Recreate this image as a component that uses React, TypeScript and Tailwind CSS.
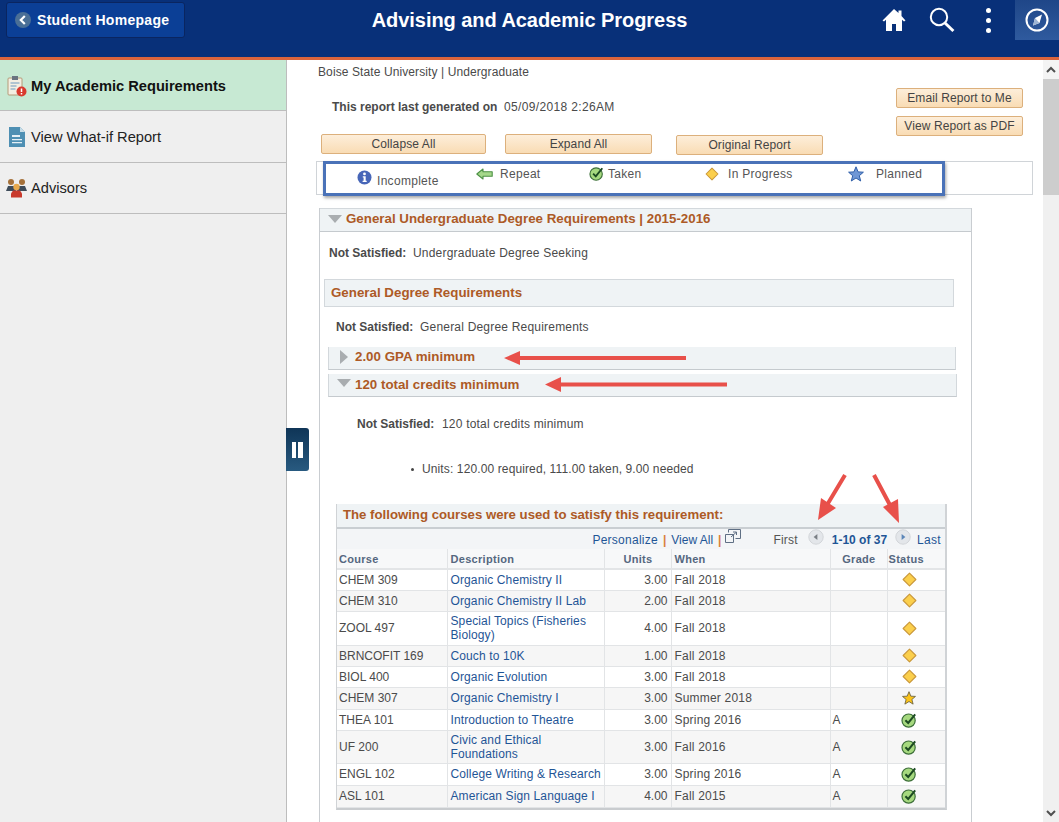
import type { ReactNode } from 'react';

type Status = 'progress' | 'planned' | 'taken';

const COURSES: { course: string; desc: ReactNode; units: string; when: string; grade: string; status: Status; h: string }[] = [
  { course: 'CHEM 309', desc: 'Organic Chemistry II', units: '3.00', when: 'Fall 2018', grade: '', status: 'progress', h: 'h-[21px]' },
  { course: 'CHEM 310', desc: 'Organic Chemistry II Lab', units: '2.00', when: 'Fall 2018', grade: '', status: 'progress', h: 'h-[21px]' },
  { course: 'ZOOL 497', desc: 'Special Topics (Fisheries Biology)', units: '4.00', when: 'Fall 2018', grade: '', status: 'progress', h: 'h-[34px]' },
  { course: 'BRNCOFIT 169', desc: 'Couch to 10K', units: '1.00', when: 'Fall 2018', grade: '', status: 'progress', h: 'h-[21px]' },
  { course: 'BIOL 400', desc: 'Organic Evolution', units: '3.00', when: 'Fall 2018', grade: '', status: 'progress', h: 'h-[21px]' },
  { course: 'CHEM 307', desc: 'Organic Chemistry I', units: '3.00', when: 'Summer 2018', grade: '', status: 'planned', h: 'h-[22px]' },
  { course: 'THEA 101', desc: 'Introduction to Theatre', units: '3.00', when: 'Spring 2016', grade: 'A', status: 'taken', h: 'h-[21px]' },
  { course: 'UF 200', desc: 'Civic and Ethical Foundations', units: '3.00', when: 'Fall 2016', grade: 'A', status: 'taken', h: 'h-[33px]' },
  { course: 'ENGL 102', desc: 'College Writing & Research', units: '3.00', when: 'Spring 2016', grade: 'A', status: 'taken', h: 'h-[22px]' },
  { course: 'ASL 101', desc: 'American Sign Language I', units: '4.00', when: 'Fall 2015', grade: 'A', status: 'taken', h: 'h-[22px]' },
];

function Diamond({ size = 15 }: { size?: number }) {
  return (
    <svg width={size} height={size} viewBox="0 0 16 16" className="block">
      <path d="M8 1.200 14.800 8 8 14.800 1.200 8Z" fill="#fbcf4c" stroke="#c9973a" strokeWidth="1.2" strokeLinejoin="round" />
    </svg>
  );
}

function Check({ size = 16 }: { size?: number }) {
  return (
    <svg width={size} height={size} viewBox="0 0 16 16" className="block">
      <circle cx="7.600" cy="8.600" r="6.600" fill="#a6d97f" stroke="#3d6f3a" strokeWidth="1.2" />
      <path d="M4.400 8.200 7.200 11 14.200 2.400" fill="none" stroke="#1c4a22" strokeWidth="2" />
    </svg>
  );
}

function GoldStar() {
  return (
    <svg width="14" height="14" viewBox="0 0 16 16" className="block">
      <path d="M8 .8 10.100 5.900 15.400 6.200 11.300 9.700 12.700 15 8 12 3.300 15 4.700 9.700.6 6.200 5.900 5.900Z" fill="#fcc419" stroke="#6b6240" strokeWidth="1" />
    </svg>
  );
}

function BlueStar() {
  return (
    <svg width="16" height="16" viewBox="0 0 16 16" className="block">
      <path d="M8 .8 10.100 5.900 15.400 6.200 11.300 9.700 12.700 15 8 12 3.300 15 4.700 9.700.6 6.200 5.900 5.900Z" fill="#6f97d6" stroke="#2f5ea8" strokeWidth="1" />
    </svg>
  );
}

function InfoDot() {
  return (
    <svg width="15" height="15" viewBox="0 0 15 15" className="block">
      <circle cx="7.500" cy="7.500" r="7" fill="#4766b8" />
      <circle cx="7.500" cy="3.900" r="1.400" fill="#fff" />
      <path d="M5.800 6.200h2.900v4.600h1v1.200H5.600v-1.200h1V7.400h-.8Z" fill="#fff" />
    </svg>
  );
}

function RepeatArrow() {
  return (
    <svg width="17" height="12" viewBox="0 0 17 12" className="block">
      <path d="M.8 6 7 1v2.800h9.200v4.400H7V11Z" fill="#a5d88a" stroke="#4d9146" strokeWidth="1.1" strokeLinejoin="round" />
    </svg>
  );
}

function Triangle({ open }: { open: boolean }) {
  return open ? (
    <svg width="14" height="8" viewBox="0 0 14 8" className="block shrink-0">
      <path d="M0 0h14L7 8Z" fill="#a9adb0" />
    </svg>
  ) : (
    <svg width="8" height="14" viewBox="0 0 8 14" className="block shrink-0">
      <path d="M0 0l8 7-8 7Z" fill="#a9adb0" />
    </svg>
  );
}

function PagerDot({ next }: { next?: boolean }) {
  return (
    <svg width="16" height="16" viewBox="0 0 16 16" className="block">
      <circle cx="8" cy="8" r="7.200" fill="#e3e6ea" stroke="#d2d5d9" />
      <path d={next ? 'M6.600 5v6L10.400 8Z' : 'M9.400 5v6L5.600 8Z'} fill={next ? '#5c86b8' : '#7a7f85'} />
    </svg>
  );
}

function OrangeButton({ className, children }: { className: string; children: ReactNode }) {
  return (
    <button
      className={
        'h-[20px] rounded-[2px] border border-[#dcb07c] bg-gradient-to-b from-[#fdeeda] to-[#f9dcb4] text-center text-[12px] leading-[18px] tracking-[0.1px] text-[#444] ' +
        className
      }
    >
      {children}
    </button>
  );
}

function LegendItem({ width, icon, gap, label, low }: { width: string; icon: ReactNode; gap: string; label: string; low?: boolean }) {
  return (
    <div className={'flex items-center ' + width + ' ' + gap + ' ' + (low ? 'mb-[2px]' : 'mb-[10px]')}>
      {icon}
      <span className={'text-[12px] tracking-[0.3px] text-[#555] ' + (low ? 'mt-[7px]' : '')}>{label}</span>
    </div>
  );
}

function SubBar({ open, label, width, className }: { open: boolean; label: string; width: string; className: string }) {
  return (
    <div className={'flex h-[23px] items-center border border-t-0 border-[#d3d8dc] border-b-[#c5cace] bg-[#eff3f5] pl-[8px] ' + width + ' ' + className}>
      <div className={open ? 'mb-[4px] flex w-[18px] justify-start' : 'mb-[2px] flex w-[18px] justify-start pl-[3px]'}>
        <Triangle open={open} />
      </div>
      <span className={'text-[13.33px] font-bold text-[#ad5a26] ' + (open ? 'mb-[1px]' : 'mb-[3px]')}>{label}</span>
    </div>
  );
}

function StatusIcon({ status }: { status: Status }) {
  if (status === 'progress') return <Diamond />;
  if (status === 'planned') return <GoldStar />;
  return <Check />;
}

function CourseTable() {
  return (
    <div className="ml-[16px] w-[611px] border border-t-0 border-[#d0d3d6] border-b-2 border-b-[#c9cccf] border-r-2 border-r-[#d0d3d6]">
      <div className="flex h-[23px] items-center bg-[#eff3f5] pb-[2px] pl-[6px] text-[13.2px] font-bold text-[#ad5a26]">
        The following courses were used to satisfy this requirement:
      </div>
      <div className="flex h-[22px] items-center justify-end border-t-2 border-[#c9ced2] bg-[#f3f5f7] pr-[4px] pt-[1px] text-[12px] text-[#1f5596]">
        <span className="tracking-[0.25px]">Personalize</span>
        <span className="mx-[5px] font-bold text-[#d9803a]">|</span>
        <span>View All</span>
        <span className="ml-[5px] font-bold text-[#d9803a]">|</span>
        <svg width="16" height="14" viewBox="0 0 16 14" className="mb-[7px] ml-[4px] mr-[32px] block" fill="none" stroke="#5f6f84">
          <path d="M3.500 3.500V.5h12v9h-5" />
          <path d="M.5 5.500h8v8h-8z" />
          <path d="M6 8l5-4.500M8 3h3.500v3" />
        </svg>
        <span className="mr-[10px] tracking-[0.2px] text-[#555]">First</span>
        <span className="mb-[6px] mr-[8px]"><PagerDot /></span>
        <span className="mr-[8px] font-bold">1-10 of 37</span>
        <span className="mb-[6px] mr-[6px]"><PagerDot next /></span>
        <span className="tracking-[0.3px]">Last</span>
      </div>
      <table className="w-full table-fixed border-collapse text-[12px] text-[#4b4b4b]">
        <colgroup>
          <col className="w-[110px]" />
          <col className="w-[157px]" />
          <col className="w-[67px]" />
          <col className="w-[159px]" />
          <col className="w-[57px]" />
          <col />
        </colgroup>
        <thead>
          <tr className="h-[20px] border-b-2 border-[#e3e5e7] bg-[#f7f8f9] text-[11px] font-bold tracking-[0.3px] text-[#55677f]">
            <th className="border-r border-[#e2e4e6] pl-[2px] pt-[2px] text-left font-bold">Course</th>
            <th className="border-r border-[#e2e4e6] pl-[3px] pt-[2px] text-left font-bold">Description</th>
            <th className="border-r border-[#e2e4e6] pr-[18px] pt-[2px] text-right font-bold">Units</th>
            <th className="border-r border-[#e2e4e6] pl-[3px] pt-[2px] text-left font-bold">When</th>
            <th className="border-r border-[#e2e4e6] pr-[11px] pt-[2px] text-right font-bold">Grade</th>
            <th className="pl-[1px] pt-[2px] text-left font-bold">Status</th>
          </tr>
        </thead>
        <tbody>
          {COURSES.map((c, i) => (
            <tr key={c.course} className={c.h + ' border-b border-[#e2e4e6] ' + (i % 2 ? 'bg-[#f6f6f6]' : 'bg-white')}>
              <td className="border-r border-[#e2e4e6] pl-[2px]">{c.course}</td>
              <td className="border-r border-[#e2e4e6] pl-[3px] leading-[14px] tracking-[0.12px] text-[#1f5596]">{c.desc}</td>
              <td className="border-r border-[#e2e4e6] pr-[3px] text-right">{c.units}</td>
              <td className="border-r border-[#e2e4e6] pl-[3px] tracking-[0.2px]">{c.when}</td>
              <td className="border-r border-[#e2e4e6] pl-[2px]">{c.grade}</td>
              <td>
                <div className="flex justify-center pr-[14px]">
                  <StatusIcon status={c.status} />
                </div>
              </td>
            </tr>
          ))}
        </tbody>
      </table>
    </div>
  );
}

function SideItem({ icon, label, active, h }: { icon: ReactNode; label: string; active?: boolean; h: string }) {
  return (
    <div className={'flex items-center border-b border-[#bdbdbd] ' + h + ' ' + (active ? 'bg-[#c7e9d3] font-bold text-[#111]' : 'text-[#222]')}>
      <div className="flex w-[31px] justify-center pl-[2px]">{icon}</div>
      <span className="text-[14.67px]">{label}</span>
    </div>
  );
}

export default function App() {
  return (
    <div className="relative h-[822px] w-[1059px] overflow-hidden bg-white [font-family:'Liberation_Sans',Arial,sans-serif]">
      {/* header */}
      <header className="flex h-[60px] items-start border-b-[3px] border-[#db643c] bg-[#083079]">
        <button className="ml-[6px] mt-[2px] flex h-[36px] w-[179px] items-center rounded-[3px] border border-[#0a2560] bg-[#0b3f96] pl-[8px] text-[14px] font-bold tracking-[0.3px] text-white">
          <svg width="16" height="16" viewBox="0 0 16 16" className="mr-[6px] block">
            <circle cx="8" cy="8" r="8" fill="#4a6f96" />
            <path d="M9.800 4 5.800 8l4 4" fill="none" stroke="#fff" strokeWidth="2.2" />
          </svg>
          Student Homepage
        </button>
        <div className="flex h-[40px] w-[689px] items-center justify-center text-[20px] font-bold tracking-[-0.05px] text-white">
          Advising and Academic Progress
        </div>
        <div className="flex h-[40px] flex-1 items-center pl-[8px]">
          <svg width="24" height="24" viewBox="0 0 24 24" className="block">
            <path d="M12 1 .5 12.500l1.500 1L4 11.700V23h6v-7h4v7h6V11.700l2 1.800 1.500-1L19.500 8V2.500h-3v2.600Z" fill="#fff" />
          </svg>
          <svg width="26" height="26" viewBox="0 0 26 26" className="ml-[23px] block" fill="none" stroke="#fff">
            <circle cx="10" cy="10" r="8.200" strokeWidth="2" />
            <path d="M16 16l8.400 8" strokeWidth="3" />
          </svg>
          <div className="ml-[31px] flex flex-col gap-[5px]">
            <span className="h-[5px] w-[5px] rounded-full bg-white" />
            <span className="h-[5px] w-[5px] rounded-full bg-white" />
            <span className="h-[5px] w-[5px] rounded-full bg-white" />
          </div>
          <div className="ml-[24px] flex h-[40px] flex-1 items-center justify-center bg-gradient-to-b from-[#1f4688] to-[#2f5a9e]">
            <svg width="24" height="24" viewBox="0 0 24 24" fill="none" className="block">
              <circle cx="12" cy="12" r="10.500" stroke="#fff" strokeWidth="2" />
              <path d="M17 6.500 14.500 15 8 17.500 10 10Z" fill="#fff" />
              <path d="M10 10 14.500 15 8 17.500Z" fill="#9db4d4" />
            </svg>
          </div>
        </div>
      </header>

      <div className="flex h-[762px]">
        {/* sidebar */}
        <aside className="w-[287px] shrink-0 border-r border-[#bdbdbd] bg-[#efefef]">
          <SideItem
            active
            h="h-[51px] pt-[1px]"
            label="My Academic Requirements"
            icon={
              <svg width="20" height="22" viewBox="0 0 20 22" className="block">
                <rect x="1" y="3" width="14" height="17" rx="1" fill="#f3efe2" stroke="#b69a78" />
                <rect x="5" y="1" width="6" height="4" fill="#6a7480" />
                <path d="M3.500 8h9M3.500 11h6M3.500 14h5" stroke="#6f9bc0" />
                <circle cx="14.500" cy="16.500" r="5" fill="#d93a2e" />
                <path d="M14.500 13.500v3.400M14.500 18v1.400" stroke="#fff" strokeWidth="1.5" />
              </svg>
            }
          />
          <SideItem
            h="h-[52px]"
            label="View What-if Report"
            icon={
              <svg width="16" height="20" viewBox="0 0 16 20" className="block">
                <path d="M0 0h11l5 5v15H0Z" fill="#4e8fb3" />
                <path d="M11 0l5 5h-5Z" fill="#c7dde8" />
                <path d="M3 8h8v2H3ZM3 12h10v1.200H3ZM3 15h10v1.200H3Z" fill="#e4eff5" />
              </svg>
            }
          />
          <SideItem
            h="h-[51px]"
            label="Advisors"
            icon={
              <svg width="21" height="20" viewBox="0 0 21 20" className="block">
                <circle cx="5" cy="4" r="3" fill="#a5713a" />
                <circle cx="16" cy="4" r="3" fill="#a5713a" />
                <path d="M0 13l2-5h6l2 5ZM11 13l2-5h6l2 5Z" fill="#3e4c5a" />
                <circle cx="10.500" cy="9" r="3.200" fill="#e8a94c" />
                <path d="M5 19.500v-4l2-3h7l2 3v4Z" fill="#c8392c" />
              </svg>
            }
          />
        </aside>

        {/* report */}
        <main className="w-[756px] shrink-0 pl-[29px]">
          <div className="flex h-[74px] w-[707px]">
            <div className="flex-1 text-[12px] text-[#4a4a4a]">
              <div className="ml-[2px] mt-[4px] h-[16px] leading-[16px] tracking-[0.1px]">Boise State University | Undergraduate</div>
              <div className="ml-[16px] mt-[19px] flex h-[16px] leading-[16px]">
                <span className="w-[172px] font-bold">This report last generated on</span>
                <span className="tracking-[0.35px]">05/09/2018 2:26AM</span>
              </div>
            </div>
            <div className="mt-[28px] flex w-[127px] flex-col gap-[8px]">
              <OrangeButton className="w-[127px]">Email Report to Me</OrangeButton>
              <OrangeButton className="w-[127px]">View Report as PDF</OrangeButton>
            </div>
          </div>

          <div className="flex h-[27px] items-start pl-[5px]">
            <OrangeButton className="w-[165px]">Collapse All</OrangeButton>
            <OrangeButton className="ml-[19px] w-[147px]">Expand All</OrangeButton>
            <OrangeButton className="ml-[24px] mt-[1px] w-[147px]">Original Report</OrangeButton>
          </div>

          <div className="h-[34px] w-[717px] border border-[#d0d4d8] pl-[6px]">
            <div className="flex h-[35px] w-[622px] -translate-y-px items-center border-[3px] border-[#4a72b8] pl-[31px] shadow-[1px_2px_3px_rgba(0,0,0,0.35)]">
              <LegendItem width="w-[119px]" gap="gap-[5px]" icon={<InfoDot />} label="Incomplete" low />
              <LegendItem width="w-[113px]" gap="gap-[7px]" icon={<RepeatArrow />} label="Repeat" />
              <LegendItem width="w-[116px]" gap="gap-[4px]" icon={<Check size={15} />} label="Taken" />
              <LegendItem width="w-[143px]" gap="gap-[9px]" icon={<Diamond size={14} />} label="In Progress" />
              <LegendItem width="w-[90px]" gap="gap-[12px]" icon={<BlueStar />} label="Planned" />
            </div>
          </div>

          {/* degree requirements panel */}
          <section className="ml-[3px] mt-[13px] h-[700px] w-[653px] border-x border-[#c9cdd1]">
            <div className="flex h-[24px] items-center border-y border-[#d3d8dc] border-b-[#c5cace] bg-[#eff3f5] pb-[3px] pl-[8px]">
              <div className="w-[18px]"><Triangle open /></div>
              <span className="text-[13.33px] font-bold text-[#ad5a26]">General Undergraduate Degree Requirements | 2015-2016</span>
            </div>
            <div className="mt-[13px] flex h-[16px] pl-[9px] text-[12px] leading-[16px] text-[#4a4a4a]">
              <span className="w-[84px] font-bold">Not Satisfied:</span>
              <span className="tracking-[0.2px]">Undergraduate Degree Seeking</span>
            </div>
            <div className="ml-[4px] mt-[18px] flex h-[28px] w-[630px] items-center border border-[#d3d8dc] bg-[#eff3f5] pl-[6px] text-[13.33px] font-bold text-[#ad5a26]">
              General Degree Requirements
            </div>
            <div className="mt-[12px] flex h-[16px] pl-[16px] text-[12px] leading-[16px] text-[#4a4a4a]">
              <span className="w-[84px] font-bold">Not Satisfied:</span>
              <span className="tracking-[0.2px]">General Degree Requirements</span>
            </div>
            <SubBar open={false} label="2.00 GPA minimum" width="w-[628px]" className="ml-[8px] mt-[12px]" />
            <SubBar open label="120 total credits minimum" width="w-[629px]" className="ml-[8px] mt-[4px]" />
            <div className="mt-[19px] flex h-[16px] pl-[37px] text-[12px] leading-[16px] text-[#4a4a4a]">
              <span className="w-[85px] font-bold">Not Satisfied:</span>
              <span className="tracking-[0.2px]">120 total credits minimum</span>
            </div>
            <div className="mt-[29px] flex h-[16px] items-center pl-[91px] text-[12px] leading-[16px] tracking-[0.12px] text-[#4a4a4a]">
              <span className="mr-[8px] h-[3px] w-[3px] rounded-full bg-[#444]" />
              Units: 120.00 required, 111.00 taken, 9.00 needed
            </div>
            <div className="h-[27px]" />
            <CourseTable />
          </section>
        </main>

        {/* scrollbar */}
        <div className="flex w-[16px] shrink-0 flex-col bg-[#f0f0f0]">
          <div className="flex h-[19px] items-center justify-center bg-[#f4f4f4]">
            <svg width="10" height="7" viewBox="0 0 10 7" fill="none" stroke="#505050" strokeWidth="2" className="block">
              <path d="M1 6l4-4 4 4" />
            </svg>
          </div>
          <div className="h-[116px] bg-[#cdcdcd]" />
          <div className="flex-1" />
          <div className="flex h-[17px] items-center justify-center">
            <svg width="10" height="7" viewBox="0 0 10 7" fill="none" stroke="#505050" strokeWidth="2" className="block">
              <path d="M1 1l4 4 4-4" />
            </svg>
          </div>
        </div>
      </div>

      {/* sidebar collapse handle */}
      <div className="absolute left-[286px] top-[428px] flex h-[43px] w-[23px] items-center justify-center gap-[2px] rounded-r-[3px] bg-gradient-to-b from-[#0f3557] to-[#285a80]">
        <span className="h-[16px] w-[4px] bg-white" />
        <span className="h-[16px] w-[5px] bg-white" />
      </div>

      {/* red annotation arrows */}
      <svg width="1059" height="822" className="pointer-events-none absolute left-0 top-0 block" fill="none" stroke="#e8504a" strokeWidth="4">
        <path d="M516 358H686M557 384.500H727M845 475 827 505M874 475 891 507" />
        <path d="M504 358 520 351V365ZM545 384.500 561 377V392ZM818 520 821 498 836 508ZM899 523 883 507 898 499Z" fill="#e8504a" stroke="none" />
      </svg>
    </div>
  );
}
